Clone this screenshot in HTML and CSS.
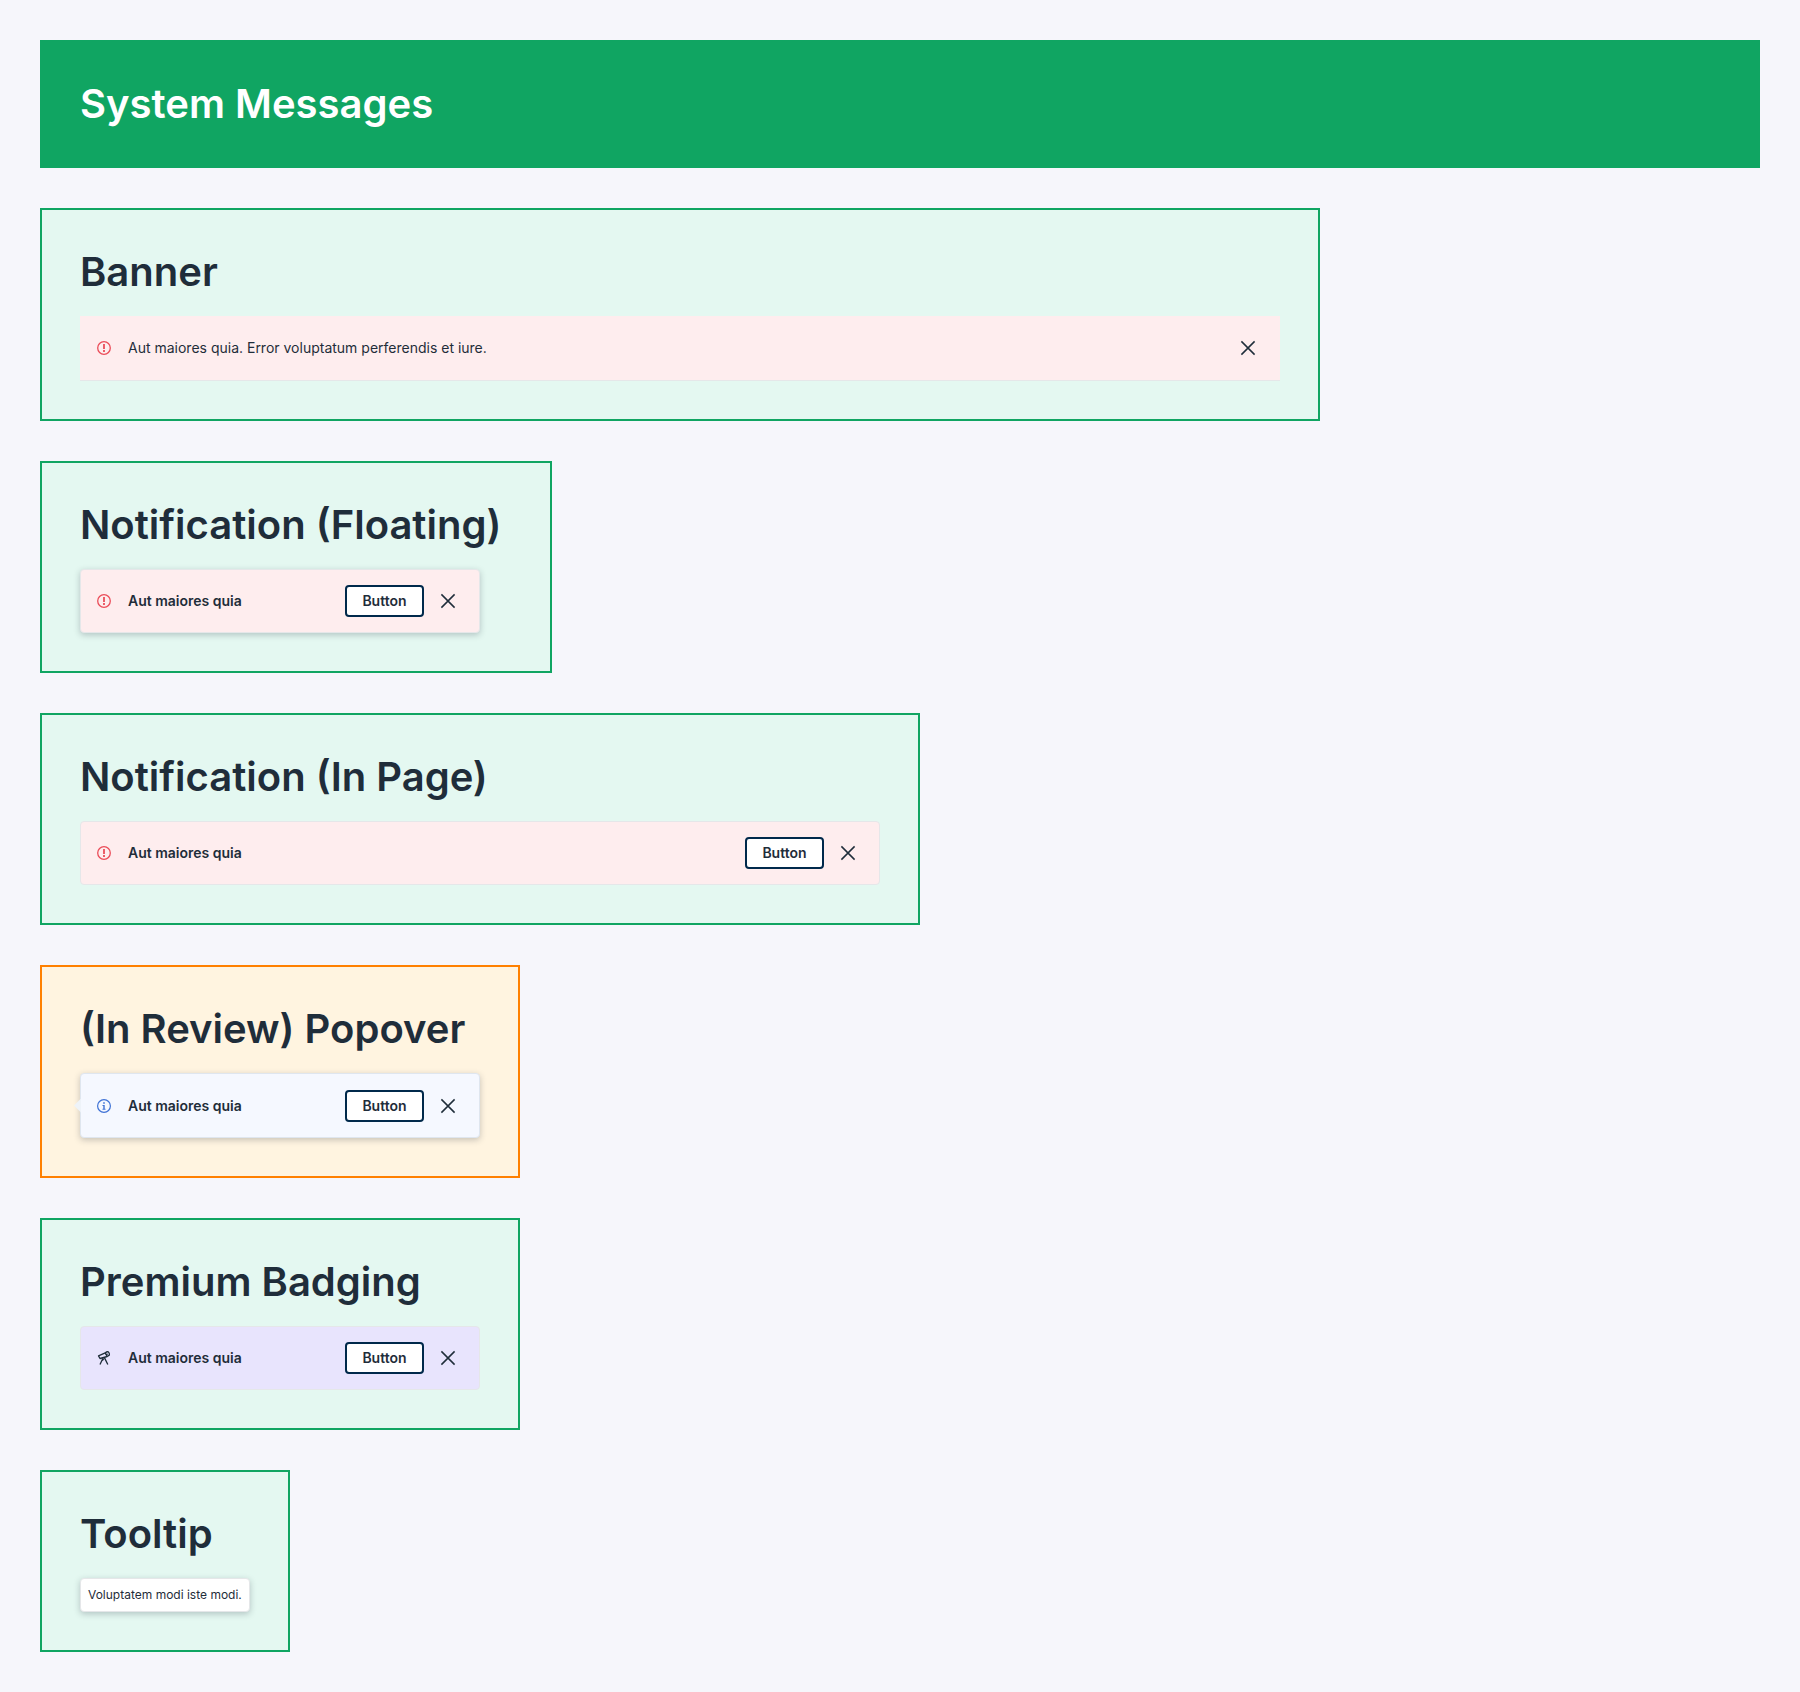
FILE: index.html
```html
<!DOCTYPE html>
<html lang="en">
<head>
<meta charset="utf-8">
<meta name="viewport" content="width=device-width, initial-scale=1">
<title>System Messages</title>
<link rel="stylesheet" href="styles.css">
</head>
<body>
<svg class="sprite" aria-hidden="true">
  <symbol id="alert" viewBox="0 0 16 16">
    <circle cx="8" cy="8" r="6.3" fill="none" stroke="currentColor" stroke-width="1.3"/>
    <path d="M7.1 4h1.8v4.9H7.1zM7.1 10.1h1.8v1.8H7.1z" fill="currentColor"/>
  </symbol>
  <symbol id="info" viewBox="0 0 16 16">
    <circle cx="8" cy="8" r="6.4" fill="none" stroke="currentColor" stroke-width="1.2"/>
    <path d="M7.2 4.2h1.6v1.6H7.2zM6.5 6.9h2.2v3.8h.8v1H6.5v-1h.8V7.9h-.8z" fill="currentColor"/>
  </symbol>
  <symbol id="telescope" viewBox="0 0 16 16">
    <g fill="none" stroke="currentColor" stroke-width="1.3" stroke-linejoin="round">
      <path d="M2.5 5.9 9.2 2.9 11.2 6.5 4 8.5z"/>
      <path d="M9.2 2.9 11.2 1.6C12.6 1.4 13.8 3.6 13.3 5.1L11.2 6.5"/>
      <path d="M9.8 4.6 11.8 4"/>
      <path d="M7.2 7.7 4 14.5M8.3 7.4 11.8 14.5M5.8 10.6 7.8 9.3"/>
    </g>
  </symbol>
  <symbol id="close" viewBox="0 0 16 16">
    <path d="M1.4 1.4 14.6 14.6M14.6 1.4 1.4 14.6" fill="none" stroke="currentColor" stroke-width="1.5"/>
  </symbol>
</svg>
<header class="page-header"><h1 class="title">System Messages</h1></header>
<main class="page-main">
  <section class="card">
    <h2 class="title">Banner</h2>
    <div class="notice notice-banner notice-error" role="alert">
      <svg class="notice-icon"><use href="#alert"/></svg>
      <p class="notice-text">Aut maiores quia. Error voluptatum perferendis et iure.</p>
      <button class="close" type="button" aria-label="Close"><svg class="close-icon"><use href="#close"/></svg></button>
    </div>
  </section>
  <section class="card card-floating">
    <h2 class="title">Notification (Floating)</h2>
    <div class="notice notice-small notice-error raised" role="alert">
      <svg class="notice-icon"><use href="#alert"/></svg>
      <p class="notice-text strong">Aut maiores quia</p>
      <button class="button" type="button">Button</button>
      <button class="close" type="button" aria-label="Close"><svg class="close-icon"><use href="#close"/></svg></button>
    </div>
  </section>
  <section class="card">
    <h2 class="title">Notification (In Page)</h2>
    <div class="notice notice-medium notice-error" role="alert">
      <svg class="notice-icon"><use href="#alert"/></svg>
      <p class="notice-text strong">Aut maiores quia</p>
      <button class="button" type="button">Button</button>
      <button class="close" type="button" aria-label="Close"><svg class="close-icon"><use href="#close"/></svg></button>
    </div>
  </section>
  <section class="card card-review">
    <h2 class="title">(In Review) Popover</h2>
    <div class="notice notice-small notice-info raised popover">
      <svg class="notice-icon"><use href="#info"/></svg>
      <p class="notice-text strong">Aut maiores quia</p>
      <button class="button" type="button">Button</button>
      <button class="close" type="button" aria-label="Close"><svg class="close-icon"><use href="#close"/></svg></button>
    </div>
  </section>
  <section class="card">
    <h2 class="title">Premium Badging</h2>
    <div class="notice notice-small notice-premium">
      <svg class="notice-icon"><use href="#telescope"/></svg>
      <p class="notice-text strong">Aut maiores quia</p>
      <button class="button" type="button">Button</button>
      <button class="close" type="button" aria-label="Close"><svg class="close-icon"><use href="#close"/></svg></button>
    </div>
  </section>
  <section class="card">
    <h2 class="title">Tooltip</h2>
    <div class="tooltip raised" role="tooltip">Voluptatem modi iste modi.</div>
  </section>
</main>
</body>
</html>
```
FILE: styles.css
```css
* { box-sizing: border-box; }

body {
  margin: 0;
  padding: 40px;
  display: flex;
  flex-direction: column;
  gap: 40px;
  background: #f6f6fb;
  color: #1f2d3a;
  font-family: Inter, "Liberation Sans", sans-serif;
  font-size: 14px;
  line-height: 20px;
}

.sprite { display: none; }

.page-header {
  padding: 40px;
  background: #10a562;
  color: #fff;
}

.title {
  margin: 0;
  font-size: 40px;
  line-height: 48px;
  font-weight: 600;
}

.page-main {
  display: flex;
  flex-direction: column;
  align-items: flex-start;
  gap: 40px;
}

.card {
  display: flex;
  flex-direction: column;
  align-items: flex-start;
  gap: 20px;
  max-width: 100%;
  padding: 38px;
  border: 2px solid #10a562;
  background: #e4f8f1;
}

.card-floating { width: 512px; }

.card-review {
  border-color: #ff8000;
  background: #fff4e0;
}

.notice {
  display: flex;
  align-items: center;
  max-width: 100%;
  padding: 15px;
  border: 1px solid #e5e7e9;
  border-radius: 4px;
}

.notice-banner {
  width: 1200px;
  padding: 16px;
  border-width: 0 0 1px;
  border-radius: 0;
}

.notice-small { width: 400px; }
.notice-medium { width: 800px; }
.notice-error { background: #feedee; }
.notice-info { background: #f5f8ff; border-color: #dfe6ef; }
.notice-premium { background: #e8e4fd; }

.raised { box-shadow: 0 2px 6px rgba(31, 45, 58, 0.25); }

.notice-icon {
  flex: none;
  width: 16px;
  height: 16px;
}

.notice-error .notice-icon { color: #eb4d59; }
.notice-info .notice-icon { color: #3f72d6; }

.notice-text {
  flex: 1;
  margin: 0 16px;
}

.strong { font-weight: 600; }

.button {
  min-width: 79px;
  height: 32px;
  padding: 0 14px;
  border: 2px solid #00294b;
  border-radius: 4px;
  background: #fff;
  color: inherit;
  font: inherit;
  font-weight: 600;
}

.close {
  display: flex;
  align-items: center;
  justify-content: center;
  width: 32px;
  height: 32px;
  margin-left: 8px;
  padding: 0;
  border: 0;
  background: none;
  color: inherit;
}

.close-icon {
  width: 16px;
  height: 16px;
}

.popover {
  position: relative;
  padding-top: 16px;
}

.popover::before {
  content: "";
  position: absolute;
  top: 50%;
  left: -7px;
  width: 7px;
  height: 14px;
  margin-top: -7px;
  background: #eef3f9;
  clip-path: polygon(100% 0, 0 50%, 100% 100%);
}

.tooltip {
  padding: 8px 7px;
  border: 1px solid #e5e7e9;
  border-radius: 4px;
  background: #fff;
  font-size: 12px;
  line-height: 16px;
}
```
